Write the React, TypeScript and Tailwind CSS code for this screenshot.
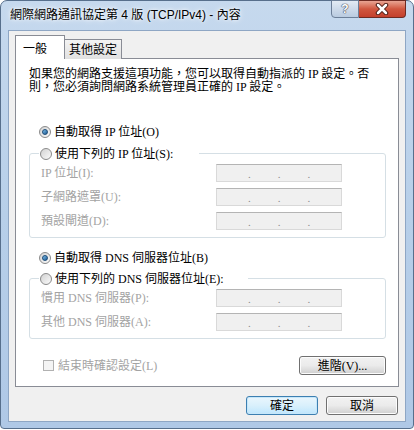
import React from "react";

function Radio({ checked }: { checked?: boolean }) {
  return (
    <span className="flex size-[12px] shrink-0 items-center justify-center rounded-full border border-[#8a8a8a] bg-gradient-to-br from-[#d2d2d2] to-[#fbfbfb]">
      {checked && (
        <span className="size-[6px] rounded-full border border-[#1c4c78] bg-gradient-to-br from-[#7fc0ec] to-[#1b5a92]" />
      )}
    </span>
  );
}

function IpBox() {
  return (
    <div className="flex h-[18px] w-[126px] items-end border border-[#d9d9d9] border-t-[#b4b4b4] bg-[#f0f0f0] pb-[1px] text-[11px] leading-[12px] text-[#8c8c8c]">
      <span className="w-[31px]" />
      <span>.</span>
      <span className="w-[27px]" />
      <span>.</span>
      <span className="w-[27px]" />
      <span>.</span>
    </div>
  );
}

function Btn({ label, def, w }: { label: string; def?: boolean; w: string }) {
  return (
    <div
      className={`${w} flex h-[19px] items-center justify-center rounded-[3px] border text-[12px] leading-none text-black ${
        def
          ? "border-[#3c7fb1] bg-gradient-to-b from-[#eaf6fd] via-[#d9f0fc] to-[#bee6fd] shadow-[inset_0_0_0_1px_#c6e7fa]"
          : "border-[#707070] bg-gradient-to-b from-[#f2f2f2] via-[#ebebeb] to-[#cfcfcf] shadow-[inset_0_0_0_1px_#fcfcfc]"
      }`}
    >
      {label}
    </div>
  );
}

function Group({ legend, gap, rows }: { legend: string; gap: string; rows: string[] }) {
  return (
    <div className="relative mr-[12px] rounded-[3px] border border-[#d5dfe5] pb-[7px] pl-[11px] pt-[10px]">
      <div className={`absolute left-[9px] top-[-8px] flex h-[16px] items-center gap-[3px] bg-white pl-[1px] ${gap}`}>
        <Radio />
        <span className="whitespace-nowrap">{legend}</span>
      </div>
      <div className="flex flex-col gap-[6px]">
        {rows.map((r) => (
          <div key={r} className="flex h-[18px] items-center">
            <span className="w-[175px] whitespace-nowrap text-[#a3a3a3]">{r}</span>
            <IpBox />
          </div>
        ))}
      </div>
    </div>
  );
}

export default function App() {
  return (
    <div className="h-[430px] w-[414px] bg-white font-['Liberation_Sans','Noto_Sans_CJK_TC',sans-serif]">
      <div className="flex h-[429px] w-[414px] flex-col rounded-t-[7px] rounded-b-[4px] border border-[#576f8c] bg-gradient-to-b from-[#c6d9ee] via-[#b7cfe9] to-[#afc8e6] px-[7px] pb-[6px]">
        {/* title bar */}
        <div className="flex h-[29px] items-start justify-between">
          <span className="pl-[2px] pt-[7px] text-[12px] leading-[14px] text-black [text-shadow:0_0_6px_#fff,0_0_3px_#fff]">
            網際網路通訊協定第 4 版 (TCP/IPv4) - 內容
          </span>
          <div className="-mt-px flex">
            <div className="flex h-[18px] w-[28px] items-center justify-center rounded-bl-[4px] border border-[#6c7f98] bg-gradient-to-b from-[#e3ebf4] via-[#cddaea] to-[#b9cbe0] text-[12px] font-bold leading-none text-white [text-shadow:0_0_1px_#445,0_0_1px_#445,0_0_1px_#445]">
              ?
            </div>
            <div className="flex h-[18px] w-[47px] items-center justify-center rounded-br-[4px] border border-l-0 border-[#6e2a22] bg-gradient-to-b from-[#e8a493] via-[#d0563f] to-[#c4402c]">
              <svg width="14" height="12" viewBox="0 0 14 12">
                <path d="M3 2 L11 10 M11 2 L3 10" stroke="#4a1b14" strokeWidth="4.5" strokeLinecap="round" />
                <path d="M3 2 L11 10 M11 2 L3 10" stroke="#fff" strokeWidth="2.5" strokeLinecap="round" />
              </svg>
            </div>
          </div>
        </div>

        {/* client */}
        <div className="flex flex-1 flex-col border border-[#8ea6c4] bg-[#f0f0f0] px-[6px] pt-[4px] text-[12px] leading-[14px] text-black">
          {/* tabs */}
          <div className="relative z-10 -mb-px flex h-[24px] items-end">
            <div className="flex h-[24px] w-[50px] items-center border border-b-0 border-[#898c95] bg-white pl-[7px] pt-[1px] font-['Noto_Sans_CJK_TC',sans-serif]">
              一般
            </div>
            <div className="flex h-[20px] w-[57px] items-center justify-center border border-b-0 border-l-0 border-[#898c95] bg-gradient-to-b from-[#f3f3f3] to-[#e1e1e1]">
              其他設定
            </div>
          </div>

          {/* panel */}
          <div className="flex h-[329px] flex-col border border-[#898c95] bg-white pl-[13px] pt-[9px] font-['Liberation_Serif','Noto_Sans_CJK_TC',serif]">
            <p className="whitespace-nowrap leading-[13px]">
              如果您的網路支援這項功能，您可以取得自動指派的 IP 設定。否
              <br />
              則，您必須詢問網路系統管理員正確的 IP 設定。
            </p>

            <div className="mt-[30px] flex h-[16px] items-center gap-[3px] pl-[10px]">
              <Radio checked />
              <span>自動取得 IP 位址(O)</span>
            </div>

            <div className="mt-[13px]">
              <Group
                legend="使用下列的 IP 位址(S):"
                gap="pr-[26px]"
                rows={["IP 位址(I):", "子網路遮罩(U):", "預設閘道(D):"]}
              />
            </div>

            <div className="mt-[12px] flex h-[16px] items-center gap-[3px] pl-[10px]">
              <Radio checked />
              <span>自動取得 DNS 伺服器位址(B)</span>
            </div>

            <div className="mt-[12px]">
              <Group
                legend="使用下列的 DNS 伺服器位址(E):"
                gap="pr-[24px]"
                rows={["慣用 DNS 伺服器(P):", "其他 DNS 伺服器(A):"]}
              />
            </div>

            <div className="mr-[12px] mt-[17px] flex items-center justify-between">
              <div className="flex items-center gap-[4px] pl-[14px]">
                <span className="size-[11px] border border-[#b1b1b1] bg-[#f4f4f4]" />
                <span className="text-[#a3a3a3]">結束時確認設定(L)</span>
              </div>
              <Btn label="進階(V)..." w="w-[87px]" />
            </div>
          </div>

          {/* bottom buttons */}
          <div className="mr-[1px] mt-[9px] flex justify-end gap-[8px]">
            <Btn label="確定" def w="w-[72px]" />
            <Btn label="取消" w="w-[72px]" />
          </div>
        </div>
      </div>
    </div>
  );
}
